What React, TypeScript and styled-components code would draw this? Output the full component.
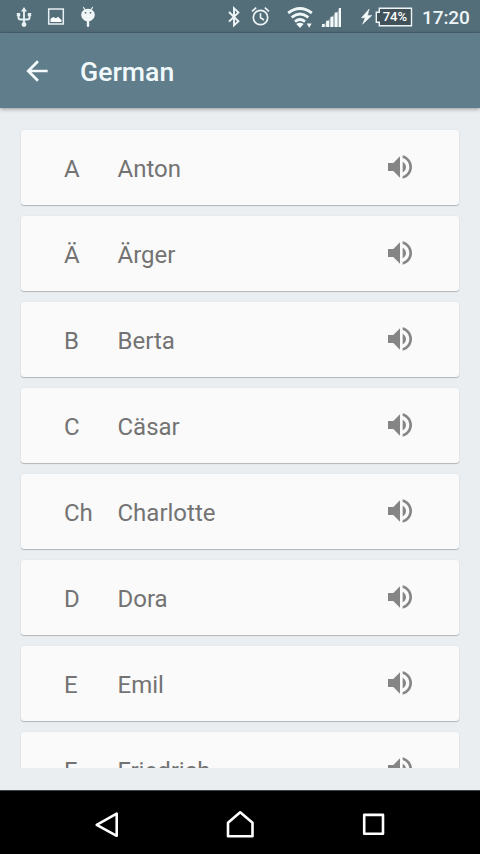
import React from "react";
import styled, { createGlobalStyle } from "styled-components";

const GlobalStyle = createGlobalStyle`
  * { box-sizing: border-box; }
  body { margin: 0; background: #ebeef1; font-family: Roboto, sans-serif; }
  svg { display: block; flex: none; }
`;

const Screen = styled.div`
  width: 480px;
  height: 854px;
  display: flex;
  flex-direction: column;
  overflow: hidden;
  background: #ebeef1;
`;

const StatusBar = styled.header`
  height: 33px;
  flex: none;
  display: flex;
  justify-content: space-between;
  background: #536d79;
  border-bottom: 1px solid #4b6571;
`;

const Clock = styled.time`
  width: 58px;
  padding-top: 2px;
  font-size: 19px;
  line-height: 32px;
  font-weight: 500;
  letter-spacing: -0.1px;
  color: #eef5f7;
`;

const StatusGroup = styled.div`
  display: flex;
`;

const AppBar = styled.div`
  height: 75px;
  flex: none;
  display: flex;
  align-items: center;
  padding-left: 21px;
  background: #607d8b;
  box-shadow: 0 1px 4px rgba(0, 0, 0, 0.38);
  z-index: 1;
`;

const BackButton = styled.button`
  padding: 0;
  border: 0;
  background: none;
  color: #f3fafb;
`;

const Title = styled.h1`
  margin: 2px 0 0 27px;
  font-size: 26.67px;
  line-height: 32px;
  font-weight: 500;
  color: #f1fafb;
`;

const List = styled.main`
  height: 660px;
  flex: none;
  display: flex;
  flex-direction: column;
  gap: 10.5px;
  padding: 21.5px 21px 0;
  overflow: hidden;
`;

const Card = styled.article`
  height: 75.5px;
  flex: none;
  display: grid;
  grid-template-columns: 53.5px 1fr 32px;
  align-items: center;
  padding: 0 43px;
  border-radius: 3px;
  background: #fafafa;
  box-shadow: 0 1px 1px rgba(0, 0, 0, 0.24), 0 0 2px rgba(0, 0, 0, 0.05);
  color: #737373;
`;

const CardText = styled.span`
  padding-top: 3px;
  font-size: 24px;
  line-height: 30px;
`;

const NavBar = styled.nav`
  height: 64px;
  flex: none;
  margin-top: auto;
  display: flex;
  justify-content: center;
  padding-top: 18px;
  gap: 101.5px;
  background: #000;
  border-top: 1px solid #3e4445;
`;

const NavButton = styled.button`
  height: 32px;
  padding: 0;
  border: 0;
  background: none;
`;

const BatteryText = styled.text`
  font: 500 13.5px Roboto, sans-serif;
`;

const entries = [
  ["A", "Anton"],
  ["Ä", "Ärger"],
  ["B", "Berta"],
  ["C", "Cäsar"],
  ["Ch", "Charlotte"],
  ["D", "Dora"],
  ["E", "Emil"],
  ["F", "Friedrich"],
];

const Notifications = () => (
  <svg width="110" height="32" viewBox="0 0 110 32" fill="none" stroke="#e6eff2">
    <g strokeWidth="1.9">
      <path d="M24 10v14M18.5 14v3.5q0 2 2 2h7q2 0 2-2V14" />
      <path d="M24 7l3 4.5h-6zM16.8 13h3.4v3.2h-3.4zM27.8 13h3.4v3.2h-3.4z" fill="#e6eff2" stroke="none" />
      <circle cx="24" cy="24.5" r="2.4" fill="#e6eff2" stroke="none" />
    </g>
    <path d="M48.7 9h14.6v15H48.7z" strokeWidth="1.5" />
    <path d="M50.5 22v-3l2.5-2 3 1.2 2-1.5 3.5 3.3v2z" fill="#fff" stroke="none" />
    <path d="M83.3 7.2l2 3M92.7 7.2l-2 3" strokeWidth="1.2" />
    <path d="M81.2 14.5a6.8 5.8 0 0 1 13.6 0c0 3.6-2.6 6.3-5.6 6.7v4.6q0 1.2-1.2 1.2t-1.2-1.2v-4.6c-3-.4-5.6-3.1-5.6-6.7z" fill="#f0f6f8" stroke="none" />
    <path d="M84.8 12.8h1.5M89.7 12.8h1.5" stroke="#536d79" strokeWidth="1.5" />
  </svg>
);

const Indicators = () => (
  <svg width="202" height="32" viewBox="220 0 202 32" fill="none" stroke="#eef5f7">
    <path d="M229 12l9.4 9.2-4.4 4.2V8.2l4.4 4.2L229 21.6" strokeWidth="1.9" />
    <circle cx="260.5" cy="17.5" r="7.2" strokeWidth="1.7" />
    <path d="M260.5 13.3v4.5l3.5 2.2M252 11.4l4.2-3.7M269 11.4l-4.2-3.7" strokeWidth="1.6" />
    <g strokeWidth="2.9">
      <path d="M288.2 13q11.8-9 23.6 0M291.6 17.3q8.4-6.6 16.8 0M295 21.6q5-4 10 0" />
    </g>
    <g fill="#f5fafb" stroke="none">
      <path d="M296.2 23.9q3.7-2.2 7.4 0L300 28zM306.7 23.5h5l-2.5 4.3z" />
      <path d="M322 24h2.6v3H322zM326.2 20.8h2.8V27h-2.8zM330.5 16.8h2.8V27h-2.8zM334.7 12.5h2.8V27h-2.8zM338.8 8h2.2v19h-2.2z" />
      <path d="M321 27l20-19v19z" opacity=".35" />
      <path d="M369.2 9l-7.8 8.8h3.8l-2.6 6.4 9.3-8.8h-4.4z" stroke="#f5fafb" strokeWidth=".5" />
    </g>
    <path d="M379.3 8.3h32.2v17.4h-32.2v-3.5h-3v-10h3z" fill="#40515a" strokeWidth="1.4" />
    <BatteryText x="382.7" y="21.4" fill="#fff" stroke="none" textLength="24.5" lengthAdjust="spacingAndGlyphs">74%</BatteryText>
  </svg>
);

const BackArrow = () => (
  <svg width="32" height="32" viewBox="0 0 24 24" fill="currentColor">
    <path d="M20 11H7.83l5.59-5.59L12 4l-8 8 8 8 1.41-1.41L7.83 13H20v-2z" />
  </svg>
);

const Speaker = () => (
  <svg width="32" height="32" viewBox="0 0 24 24" fill="#858585">
    <path d="M3 9v6h4l5 5V4L7 9H3zm13.5 3c0-1.77-1.02-3.29-2.5-4.03v8.05c1.48-.73 2.5-2.25 2.5-4.02zM14 3.23v2.06c2.89.86 5 3.54 5 6.71s-2.11 5.85-5 6.71v2.06c4.01-.91 7-4.49 7-8.77s-2.99-7.86-7-8.77z" />
  </svg>
);

const navIcons = [
  { label: "Back", path: "M25.7 4.7v22.1L5.7 15.8z" },
  { label: "Home", path: "M4 27.2V13.8L16.2 3.3l12.3 10.5v13.4z" },
  { label: "Recent apps", path: "M6.2 5.9h18.8v18.9H6.2z" },
];

export default function App() {
  return (
    <Screen>
      <GlobalStyle />
      <StatusBar>
        <Notifications />
        <StatusGroup>
          <Indicators />
          <Clock>17:20</Clock>
        </StatusGroup>
      </StatusBar>
      <AppBar>
        <BackButton aria-label="Back"><BackArrow /></BackButton>
        <Title>German</Title>
      </AppBar>
      <List>
        {entries.map(([letter, word]) => (
          <Card key={letter}>
            <CardText>{letter}</CardText>
            <CardText>{word}</CardText>
            <Speaker />
          </Card>
        ))}
      </List>
      <NavBar>
        {navIcons.map(({ label, path }) => (
          <NavButton key={label} aria-label={label}>
            <svg width="32" height="32" viewBox="0 0 32 32" fill="none" stroke="#fff" strokeWidth="2.6" strokeLinejoin="round">
              <path d={path} />
            </svg>
          </NavButton>
        ))}
      </NavBar>
    </Screen>
  );
}
